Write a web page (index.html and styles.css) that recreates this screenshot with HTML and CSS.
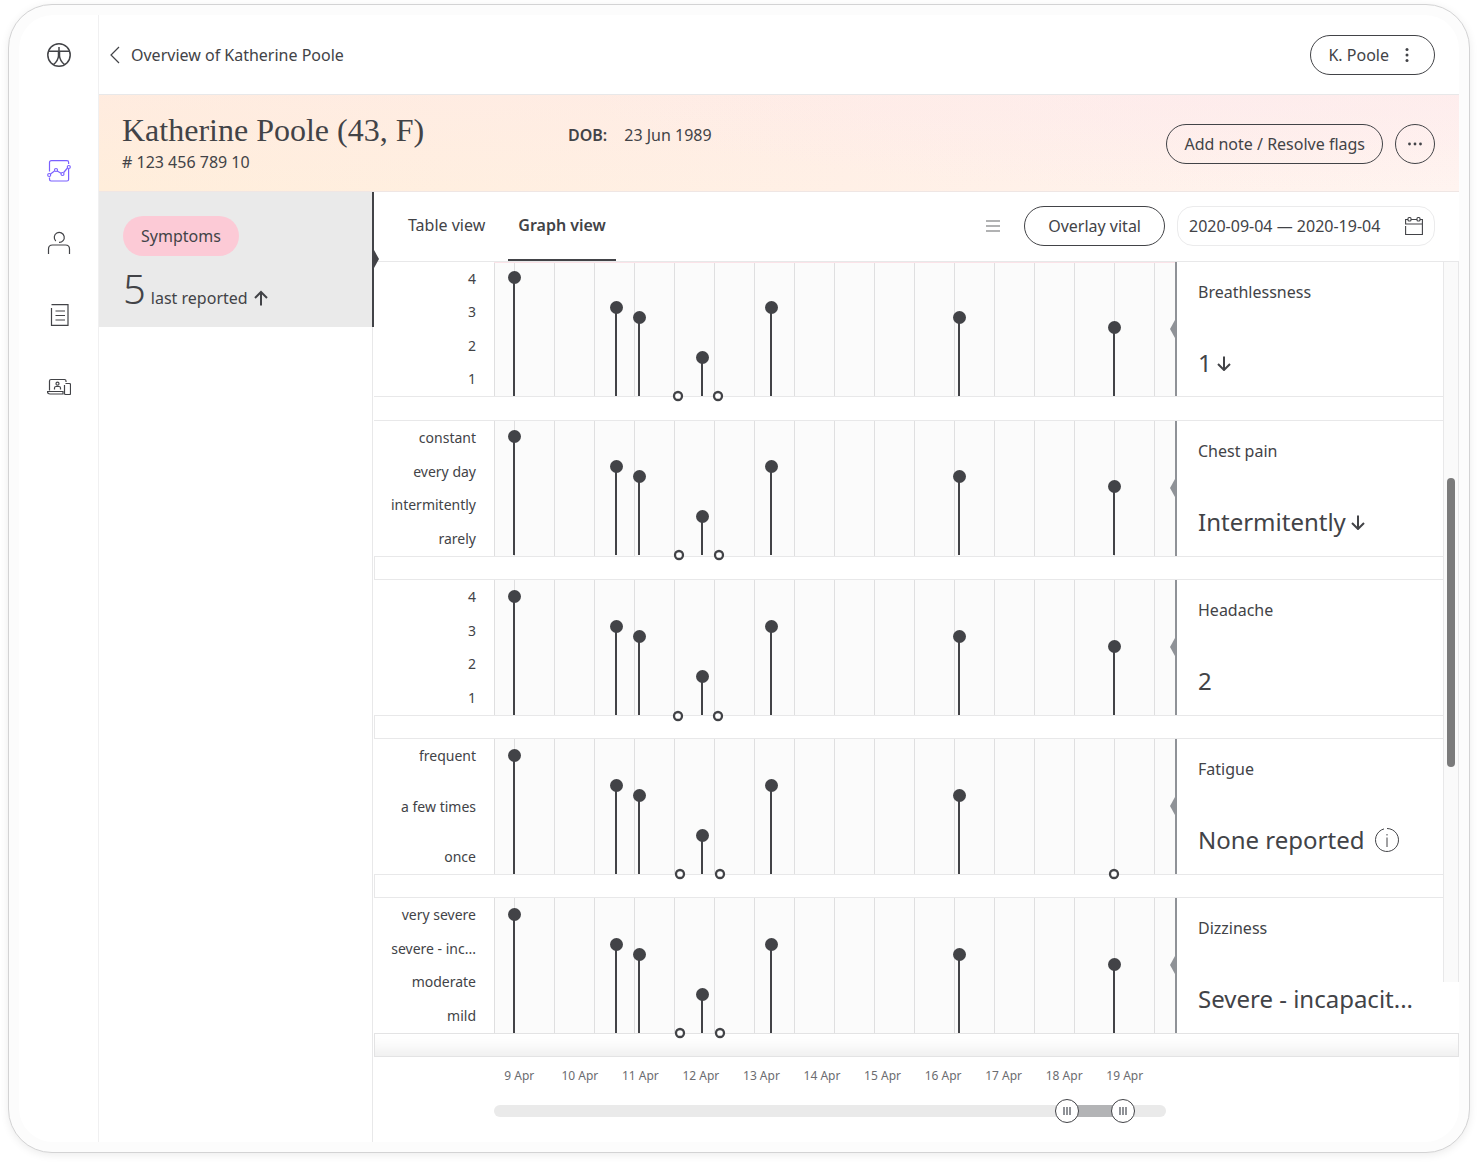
FILE: index.html
```html
<!DOCTYPE html>
<html lang="en">
<head>
<meta charset="utf-8">
<meta name="viewport" content="width=device-width, initial-scale=1">
<title>Katherine Poole – Symptoms</title>
<link rel="stylesheet" href="styles.css">
</head>
<body>
<svg class="defs" aria-hidden="true">
  <defs>
    <g id="readings">
      <path class="stem" d="M20 15V134M122 45V134M145 55V134M208 95V134M277 45V134M465 55V134"/>
      <circle class="dot" cx="20.5" cy="15.5" r="6.5"/>
      <circle class="dot" cx="122.5" cy="45.5" r="6.5"/>
      <circle class="dot" cx="145.5" cy="55.5" r="6.5"/>
      <circle class="dot" cx="208.5" cy="95.5" r="6.5"/>
      <circle class="dot" cx="277.5" cy="45.5" r="6.5"/>
      <circle class="dot" cx="465.5" cy="55.5" r="6.5"/>
    </g>
    <g id="latest">
      <path class="stem" d="M620 65V134"/>
      <circle class="dot" cx="620.5" cy="65.5" r="6.5"/>
    </g>
    <path id="pointer" class="pointer" d="M681 58L676 67L681 76Z"/>
    <symbol id="arrow-down" viewBox="0 0 16 16"><path d="M8 1.500V15M2 9L8 15L14 9" fill="none" stroke="currentColor" stroke-width="2"/></symbol>
    <symbol id="arrow-up" viewBox="0 0 16 16"><path d="M8 15.500V2M2 8L8 2L14 8" fill="none" stroke="currentColor" stroke-width="2"/></symbol>
  </defs>
</svg>

<div class="device">
  <div class="screen">
    <nav class="rail" aria-label="Main">
      <a class="rail-logo" href="#" aria-label="Home">
        <svg width="24" height="24" viewBox="0 0 24 24" fill="none" stroke="#424347" stroke-width="1.500"><circle cx="12" cy="12" r="11.200"/><path d="M1.500 8.300H22.500M12 4V13.500M11.500 8.500V13C11.200 16.500 9 19.500 6.500 21.500M12.500 8.500V13C12.800 16.500 15 19.500 17.500 21.500"/></svg>
      </a>
      <a href="#" aria-label="Vitals" aria-current="page">
        <svg width="24" height="24" viewBox="0 0 24 24" fill="none" stroke="#7b61ff" stroke-width="1.200"><path d="M2.500 12.500V3.500Q2.500 1.600 4.500 1.600H20Q21.600 1.600 21.600 3.200V5M21.600 10V20.500Q21.600 22 20 22H4Q2.500 22 2.500 20V18.500M3.500 15L7.500 12M10.200 12L14 14.200M16.700 13.500L20.500 9"/><circle cx="2.200" cy="16" r="1.500"/><circle cx="9" cy="11" r="1.500"/><circle cx="15.500" cy="15" r="1.500"/><circle cx="21.800" cy="8" r="1.500"/></svg>
      </a>
      <a href="#" aria-label="Patients">
        <svg width="24" height="24" viewBox="0 0 24 24" fill="none" stroke="#424347" stroke-width="1.200"><path d="M8.800 10A5 5 0 1 1 12 11.400M1.500 23V18Q1.500 14 5.500 14H18.500Q22.500 14 22.500 18V23"/></svg>
      </a>
      <a href="#" aria-label="Notes">
        <svg width="24" height="24" viewBox="0 0 24 24" fill="none" stroke="#424347" stroke-width="1.200"><path d="M4.500 1.600H21V22.400H4.500V5M8.500 8H18M8.500 12.500H18M8.500 17H18"/></svg>
      </a>
      <a href="#" aria-label="Devices">
        <svg width="24" height="24" viewBox="0 0 24 24" fill="none" stroke="#424347" stroke-width="1.200"><path d="M2.500 15.500V6Q2.500 4.500 4 4.500H17.500Q19 4.500 19 6V7M.5 16.500H16V19H3Q.5 19 .5 16.500ZM7.500 14.500V13Q7.500 11.500 9 11.500H12Q13.500 11.500 13.500 13V14.500"/><circle cx="10.500" cy="8.700" r="1.500"/><path d="M17.500 10V18.500Q17.500 19.500 18.500 19.500H22.500Q23.500 19.500 23.500 18.500V9.500Q23.500 8.500 22.500 8.500H18.500"/></svg>
      </a>
    </nav>

    <div class="page">
      <header class="topbar">
        <a class="back" href="#">
          <svg width="10" height="18" viewBox="0 0 10 18" fill="none" stroke="#424347" stroke-width="1.200"><path d="M9 1L1 9L9 17"/></svg>
          Overview of Katherine Poole
        </a>
        <button class="pill" type="button">K. Poole
          <svg class="kebab" width="4" height="14" viewBox="0 0 4 14" fill="#424347"><circle cx="2" cy="1.500" r="1.500"/><circle cx="2" cy="7" r="1.500"/><circle cx="2" cy="12.500" r="1.500"/></svg>
        </button>
      </header>

      <section class="banner">
        <div>
          <h1>Katherine Poole (43, F)</h1>
          <p># 123 456 789 10</p>
        </div>
        <dl class="dob"><dt>DOB:</dt><dd>23 Jun 1989</dd></dl>
        <div class="banner-actions">
          <button class="pill" type="button">Add note / Resolve flags</button>
          <button class="pill round" type="button" aria-label="More">
            <svg width="14" height="4" viewBox="0 0 14 4" fill="#424347"><circle cx="1.500" cy="2" r="1.400"/><circle cx="7" cy="2" r="1.400"/><circle cx="12.500" cy="2" r="1.400"/></svg>
          </button>
        </div>
      </section>

      <div class="workspace">
        <aside class="sidebar">
          <div class="summary">
            <span class="chip">Symptoms</span>
            <p class="count"><strong>5</strong> last reported <svg width="16" height="16"><use href="#arrow-up"/></svg></p>
            <svg class="summary-pointer" width="5" height="18" viewBox="0 0 5 18"><path d="M0 0L5 9L0 18Z" fill="#424347"/></svg>
          </div>
        </aside>

        <main class="content">
          <div class="toolbar">
            <div class="tabs">
              <button class="tab" type="button">Table view</button>
              <button class="tab active" type="button">Graph view</button>
            </div>
            <button class="menu" type="button" aria-label="Menu">
              <svg width="14" height="12" viewBox="0 0 14 12" stroke="#98999b" stroke-width="1.500"><path d="M0 1H14M0 6H14M0 11H14"/></svg>
            </button>
            <button class="pill wide" type="button">Overlay vital</button>
            <div class="range">
              <input type="text" aria-label="Date range" value="2020-09-04 — 2020-19-04">
              <svg width="18" height="20" viewBox="0 0 18 20" fill="none" stroke="#424347" stroke-width="1.100"><path d="M3 3.500H.6V8H17.400V3.500H15M6 3.500H12M.6 10V18.500H17.400V8"/><rect x="3" y="1.500" width="3" height="3.500" rx="1"/><rect x="12" y="1.500" width="3" height="3.500" rx="1"/></svg>
            </div>
          </div>

          <div class="scroller">
            <div class="rows">
              <section class="row first">
                <div class="scale"><span>4</span><span>3</span><span>2</span><span>1</span></div>
                <svg class="plot flagged raised" width="683" height="134">
                  <use href="#readings"/><use href="#latest"/><use href="#pointer"/>
                  <circle class="zero" cx="184" cy="134" r="4"/><circle class="zero" cx="224" cy="134" r="4"/>
                </svg>
                <div class="detail"><h2>Breathlessness</h2><p>1 <svg width="16" height="16"><use href="#arrow-down"/></svg></p></div>
              </section>
              <div class="strip open"></div>

              <section class="row">
                <div class="scale"><span>constant</span><span>every day</span><span>intermitently</span><span>rarely</span></div>
                <svg class="plot" width="683" height="135">
                  <use href="#readings"/><use href="#latest"/><use href="#pointer"/>
                  <circle class="zero" cx="185" cy="134" r="4"/><circle class="zero" cx="225" cy="134" r="4"/>
                </svg>
                <div class="detail"><h2>Chest pain</h2><p>Intermitently <svg width="16" height="16"><use href="#arrow-down"/></svg></p></div>
              </section>
              <div class="strip"></div>

              <section class="row">
                <div class="scale"><span>4</span><span>3</span><span>2</span><span>1</span></div>
                <svg class="plot raised" width="683" height="135">
                  <use href="#readings" y="1"/><use href="#latest" y="1"/><use href="#pointer"/>
                  <circle class="zero" cx="184" cy="136" r="4"/><circle class="zero" cx="224" cy="136" r="4"/>
                </svg>
                <div class="detail"><h2>Headache</h2><p>2</p></div>
              </section>
              <div class="strip"></div>

              <section class="row">
                <div class="scale"><span>frequent</span><span>a few times</span><span>once</span></div>
                <svg class="plot raised" width="683" height="135">
                  <use href="#readings" y="1"/><use href="#pointer"/>
                  <circle class="zero" cx="186" cy="135" r="4"/><circle class="zero" cx="226" cy="135" r="4"/><circle class="zero" cx="620" cy="135" r="4"/>
                </svg>
                <div class="detail"><h2>Fatigue</h2><p>None reported
                  <svg class="info" width="24" height="24" viewBox="0 0 24 24" fill="none" stroke="#424347"><path d="M9 .9A11.500 11.500 0 1 0 12 .5"/><path d="M12 9.500V19M12 6V7.500"/></svg></p></div>
              </section>
              <div class="strip"></div>

              <section class="row">
                <div class="scale"><span>very severe</span><span>severe - inc...</span><span>moderate</span><span>mild</span></div>
                <svg class="plot raised" width="683" height="135">
                  <use href="#readings" y="1"/><use href="#latest" y="1"/><use href="#pointer"/>
                  <circle class="zero" cx="186" cy="135" r="4"/><circle class="zero" cx="226" cy="135" r="4"/>
                </svg>
                <div class="detail"><h2>Dizziness</h2><p>Severe - incapacit...</p></div>
              </section>
            </div>
            <div class="scrollbar"><div class="scrollbar-thumb"></div></div>
          </div>

          <footer class="timeline">
            <div class="strip shaded"></div>
            <ol class="days">
              <li>9 Apr</li><li>10 Apr</li><li>11 Apr</li><li>12 Apr</li><li>13 Apr</li><li>14 Apr</li><li>15 Apr</li><li>16 Apr</li><li>17 Apr</li><li>18 Apr</li><li>19 Apr</li>
            </ol>
            <div class="slider">
              <input type="range" aria-label="Start of period" min="0" max="648" value="561">
              <input type="range" aria-label="End of period" min="0" max="648" value="617">
            </div>
          </footer>
        </main>
      </div>
    </div>
  </div>
</div>
</body>
</html>
```
FILE: styles.css
```css
* { box-sizing: border-box; }

:root {
  --ink: #424347;
  --line: #e8e8e9;
}

body {
  margin: 0;
  padding: 4px 8px 12px;
  min-height: 100vh;
  display: flex;
  background: #fff;
  color: var(--ink);
  font: 16px/24px "Noto Sans", sans-serif;
}

h1, h2, p, dl, dd, ol { margin: 0; padding: 0; }
a { color: inherit; text-decoration: none; }
svg { display: block; flex: none; }
button, input { font: inherit; color: inherit; }
.defs { position: absolute; width: 0; height: 0; }

.device {
  flex: 1;
  display: flex;
  padding: 10px;
  border: 1px solid #d3d3d4;
  border-radius: 44px;
  background: #fcfcfc;
  box-shadow: 0 2px 8px rgba(0, 0, 0, .08);
}

.screen {
  flex: 1;
  min-width: 0;
  display: flex;
  border-radius: 34px;
  background: #fff;
}

/* Icon rail */
.rail {
  flex: none;
  width: 80px;
  padding-top: 28px;
  display: flex;
  flex-direction: column;
  align-items: center;
  gap: 48px;
  border-right: 1px solid #f0f0f1;
}
.rail-logo { margin-bottom: 44px; }

.page {
  flex: 1;
  min-width: 0;
  display: flex;
  flex-direction: column;
}

/* Top bar */
.topbar {
  height: 80px;
  padding: 0 24px 0 11px;
  display: flex;
  align-items: center;
  justify-content: space-between;
  border-bottom: 1px solid var(--line);
}
.back { display: flex; align-items: center; gap: 11px; }

.pill {
  height: 40px;
  padding: 0 17px;
  display: flex;
  align-items: center;
  justify-content: center;
  border: 1px solid var(--ink);
  border-radius: 20px;
  background: transparent;
  white-space: nowrap;
}
.pill.round { width: 40px; padding: 0; }
.pill.wide { padding: 0 23px; }
.kebab { margin: 0 8px 0 16px; }

/* Patient banner */
.banner {
  height: 97px;
  padding: 0 24px 0 23px;
  display: grid;
  grid-template-columns: 446px 1fr auto;
  align-items: center;
  border-bottom: 1px solid #efe6e4;
  background:
    radial-gradient(ellipse 50% 100% at 85% 0, rgba(253, 234, 239, .5), rgba(253, 234, 239, 0)),
    linear-gradient(to bottom, rgba(254, 232, 230, .4), rgba(254, 232, 230, 0)),
    linear-gradient(to right, #ffeedb, #fff0e6 55%, #fff4f0);
}
h1 { font: 400 32px/36px "Liberation Serif", serif; }
.banner p { padding-top: 2px; }
.dob {
  align-self: start;
  margin-top: 28px;
  display: flex;
  gap: 17px;
}
.dob dt { font-weight: 600; }
.banner-actions { display: flex; gap: 12px; padding-top: 2px; }

.workspace { flex: 1; display: flex; }

/* Symptoms summary */
.sidebar {
  flex: none;
  width: 274px;
  border-right: 1px solid var(--line);
}
.summary {
  position: relative;
  height: 135px;
  margin-right: -2px;
  padding: 24px;
  border-right: 2px solid var(--ink);
  background: #eaeaea;
}
.summary-pointer { position: absolute; left: 100%; top: 58px; margin-left: 2px; }
.chip {
  display: inline-flex;
  align-items: center;
  height: 40px;
  padding: 0 18px;
  border-radius: 20px;
  background: #fccad6;
}
.count {
  display: flex;
  align-items: baseline;
  gap: 5px;
  line-height: 48px;
  margin-top: 9px;
}
.count strong { font-size: 40px; font-weight: 300; }
.count svg { align-self: center; margin-top: 8px; }

/* Toolbar */
.content { flex: 1; min-width: 0; }
.toolbar {
  height: 70px;
  padding: 0 24px 0 25px;
  display: flex;
  align-items: center;
  gap: 12px;
  border-bottom: 1px solid var(--line);
}
.toolbar > :not(.tabs) { margin-bottom: 2px; }
.tabs { display: flex; gap: 13px; align-self: stretch; margin-right: auto; }
.tab {
  padding: 0 10px 2px;
  border: 0;
  border-bottom: 2px solid transparent;
  background: none;
}
.tab.active { font-weight: 600; border-color: var(--ink); }
.menu { padding: 0; margin-right: 12px; border: 0; background: none; }
.range {
  width: 258px;
  height: 40px;
  padding: 0 11px;
  display: flex;
  align-items: center;
  border: 1px solid #ebebec;
  border-radius: 16px;
}
.range input {
  flex: 1;
  min-width: 0;
  padding: 0;
  border: 0;
  outline: 0;
  background: none;
}

/* Symptom rows */
.scroller { display: flex; margin-left: 1px; }
.rows { flex: 1; min-width: 0; }
.row { display: flex; height: 135px; }
.row.first { height: 134px; }
.scale {
  flex: none;
  width: 120px;
  padding: 7px 18px 7px 0;
  display: flex;
  flex-direction: column;
  justify-content: space-between;
  align-items: flex-end;
  font-size: 14px;
  line-height: 20px;
  white-space: nowrap;
}
.plot {
  overflow: visible;
  border-right: 2px solid #8f9297;
  background:
    linear-gradient(#dfdfe0, #dfdfe0) 0 0 / 1px 100% no-repeat,
    repeating-linear-gradient(to right, #dfdfe0 0 1px, transparent 1px 40px) 20px 0 / 720px 100% no-repeat,
    #fbfbfb;
}
.flagged { box-shadow: inset 0 1px #fbe3e8; }
.raised { position: relative; z-index: 1; }
.stem { stroke: var(--ink); stroke-width: 2; }
.dot { fill: var(--ink); }
.zero { fill: #fff; stroke: var(--ink); stroke-width: 2.3; }
.pointer { fill: #8f9297; }

.detail { flex: 1; min-width: 0; padding: 18px 0 0 21px; }
.detail h2 { font-size: 16px; font-weight: 400; line-height: 24px; }
.detail p {
  margin-top: 42px;
  display: flex;
  align-items: center;
  gap: 4px;
  font-size: 24px;
  line-height: 34px;
  white-space: nowrap;
}
.detail .info { margin-left: 6px; }

.strip { height: 24px; border: solid var(--line); border-width: 1px 0 1px 1px; }
.strip.open { height: 25px; border-left: 0; }
.strip.shaded {
  border: 1px solid #e3e3e4;
  box-shadow: inset 0 -22px 20px -18px rgba(0, 0, 0, .09);
}

.scrollbar {
  flex: none;
  width: 16px;
  margin-bottom: 51px;
  padding: 216px 3px 0;
  border: solid var(--line);
  border-width: 0 1px;
  background: #fafafa;
}
.scrollbar-thumb { width: 8px; height: 289px; border-radius: 4px; background: #7b7b7b; }

/* Timeline */
.timeline { margin-left: 1px; }
.days {
  display: grid;
  grid-template-columns: repeat(11, 1fr);
  width: 666px;
  margin: 9px 0 0 115px;
  list-style: none;
  text-align: center;
  font-size: 12px;
  line-height: 20px;
  color: #6b6c70;
}
.slider {
  position: relative;
  width: 672px;
  height: 12px;
  margin: 19px 0 0 120px;
  border-radius: 6px;
  background: linear-gradient(#b3b4b6, #b3b4b6) 573px 0 / 56px 12px no-repeat #eaeaea;
}
.slider input {
  position: absolute;
  inset: -6px 0;
  width: 100%;
  height: 24px;
  margin: 0;
  appearance: none;
  background: none;
  pointer-events: none;
}
.slider input::-webkit-slider-thumb {
  appearance: none;
  width: 24px;
  height: 24px;
  border: 1px solid var(--ink);
  border-radius: 50%;
  background: linear-gradient(to right, #8f9297 0 2px, #fff 2px 3px, #8f9297 3px 5px, #fff 5px 6px, #8f9297 6px 8px) center / 8px 8px no-repeat #fff;
  pointer-events: auto;
}
```
